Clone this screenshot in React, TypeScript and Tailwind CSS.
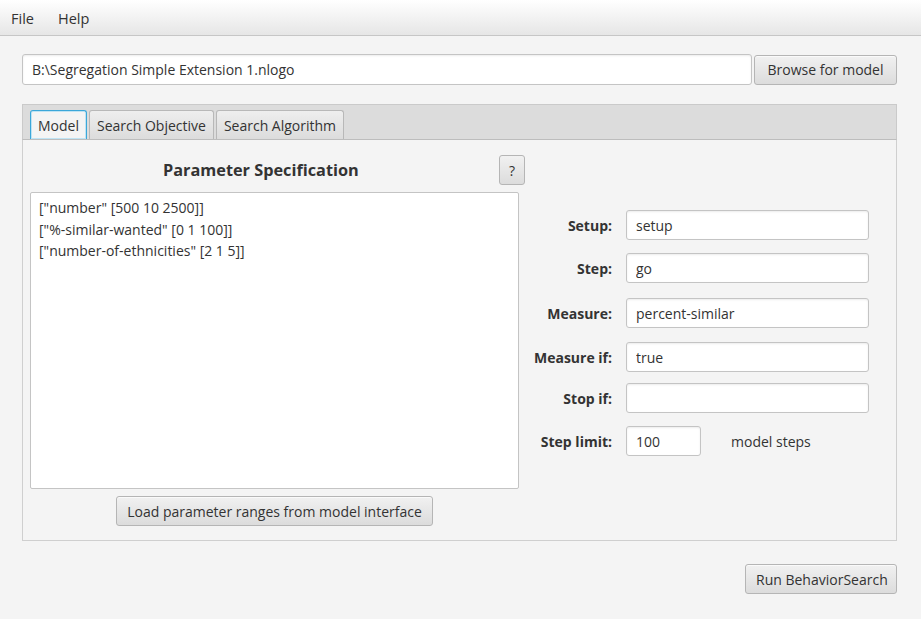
import React from 'react';

const font = { fontFamily: '"Open Sans", "Noto Sans", sans-serif' };

const btn =
  'h-[30px] px-[10px] rounded-[3px] border border-[#b5b5b5] bg-gradient-to-b from-[#f1f1f1] to-[#dcdcdc] text-[14px] text-[#333] shadow-[inset_0_1px_0_#fafafa] whitespace-nowrap';

const field =
  'h-[30px] rounded-[3px] border border-[#c4c4c4] bg-white px-[9px] text-[14px] text-[#333] shadow-[inset_0_1px_2px_rgba(0,0,0,0.08)] outline-none';

const params = ['["number" [500 10 2500]]', '["%-similar-wanted" [0 1 100]]', '["number-of-ethnicities" [2 1 5]]'];

const rows = [
  { label: 'Setup:', value: 'setup', mt: 'mt-0' },
  { label: 'Step:', value: 'go', mt: 'mt-[13px]' },
  { label: 'Measure:', value: 'percent-similar', mt: 'mt-[15px]' },
  { label: 'Measure if:', value: 'true', mt: 'mt-[14px]' },
  { label: 'Stop if:', value: '', mt: 'mt-[11px]' },
];

function Tab({ label, active }: { label: string; active?: boolean }) {
  return (
    <div
      className={`h-[29px] px-[7px] flex items-center rounded-t-[3px] text-[14px] text-[#333] border ${
        active
          ? 'bg-[#f4f4f4] border-[#3ba7d9] border-b-0 shadow-[inset_0_0_0_1px_#bfe3f3]'
          : 'bg-gradient-to-b from-[#eeeeee] to-[#dcdcdc] border-[#b8b8b8] border-b-0'
      }`}
    >
      {label}
    </div>
  );
}

export default function App() {
  return (
    <div className="w-[921px] h-[619px] bg-[#f4f4f4] overflow-hidden" style={font}>
      {/* menu bar */}
      <div className="h-[36px] flex items-center gap-[24px] px-[11px] pt-[2px] bg-gradient-to-b from-white to-[#e6e6e6] border-b border-[#c6c6c6] text-[14.5px] text-[#333]">
        <span>File</span>
        <span>Help</span>
      </div>

      <div className="pl-[22px] pr-[24px] pt-[18px]">
        <div className="flex items-center gap-[2px]">
          <input className={`${field} flex-1 h-[31px]`} defaultValue="B:\Segregation Simple Extension 1.nlogo" />
          <button className={`${btn} w-[143px]`}>Browse for model</button>
        </div>

        {/* tab pane */}
        <div className="mt-[19px] h-[437px] flex flex-col">
          <div className="h-[36px] bg-[#dcdcdc] border-t border-x border-[#cacaca] border-b border-b-[#bdbdbd] flex items-end gap-[2px] pl-[7px]">
            <Tab label="Model" active />
            <Tab label="Search Objective" />
            <Tab label="Search Algorithm" />
          </div>
          <div className="flex-1 border-x border-b border-[#cfcfcf] bg-[#f4f4f4] flex pl-[7px] pt-[15px]">
            {/* left column */}
            <div className="w-[495px] flex flex-col">
              <div className="h-[30px] flex items-center">
                <span className="ml-[133px] text-[16.3px] font-bold text-[#333]">Parameter Specification</span>
                <button className="ml-auto w-[26px] h-[30px] rounded-[3px] border border-[#b5b5b5] bg-gradient-to-b from-[#f1f1f1] to-[#dcdcdc] text-[14px] text-[#333]">
                  ?
                </button>
              </div>
              <div className="mt-[7px] w-[489px] h-[297px] bg-white border border-[#c4c4c4] rounded-[2px] px-[8px] pt-[4px] text-[14px] leading-[21.5px] text-[#333]">
                {params.map((p) => (
                  <div key={p}>{p}</div>
                ))}
              </div>
              <div className="w-[489px] mt-[7px] flex justify-center">
                <button className={`${btn} w-[317px]`}>Load parameter ranges from model interface</button>
              </div>
            </div>

            {/* right column */}
            <div className="pt-[55px] flex flex-col">
              {rows.map((r) => (
                <div key={r.label} className={`flex items-center gap-[14px] ${r.mt}`}>
                  <span className="w-[87px] text-right text-[14px] font-bold text-[#333]">{r.label}</span>
                  <input className={`${field} w-[243px]`} defaultValue={r.value} />
                </div>
              ))}
              <div className="mt-[13px] flex items-center gap-[14px]">
                <span className="w-[87px] text-right text-[14px] font-bold text-[#333]">Step limit:</span>
                <input className={`${field} w-[75px]`} defaultValue="100" />
                <span className="ml-[16px] text-[14px] text-[#333]">model steps</span>
              </div>
            </div>
          </div>
        </div>

        <div className="mt-[23px] flex justify-end">
          <button className={`${btn} w-[152px]`}>Run BehaviorSearch</button>
        </div>
      </div>
    </div>
  );
}
